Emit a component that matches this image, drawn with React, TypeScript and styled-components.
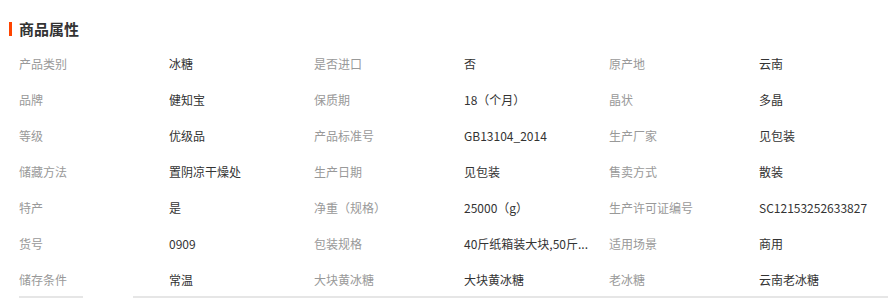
import React from 'react';
import styled, { createGlobalStyle } from 'styled-components';

const GlobalStyle = createGlobalStyle`
  body {
    margin: 0;
    background: #fff;
    font-family: "Noto Sans CJK SC", "Noto Sans", sans-serif;
  }
`;

const Panel = styled.div`
  width: 888px;
  height: 298px;
  overflow: hidden;
  display: flex;
  flex-direction: column;
`;

const Title = styled.h3`
  display: flex;
  align-items: center;
  margin: 19px 0 7px 9px;
  height: 20px;
  font-size: 15px;
  font-weight: 700;
  color: #333;
  line-height: 20px;
`;

const TitleMark = styled.span`
  width: 3px;
  height: 14px;
  margin-right: 7px;
  background: #ff4400;
`;

const Grid = styled.div`
  display: grid;
  grid-template-columns: 150px 145px 150px 145px 150px 1fr;
  grid-template-rows: repeat(6, 36px) 34px;
  padding-left: 19px;
  font-size: 12px;
  line-height: 36px;
`;

const Cell = styled.div<{ $label?: boolean }>`
  color: ${(p) => (p.$label ? '#999' : '#333')};
  white-space: nowrap;
`;

const Footer = styled.div`
  display: flex;
  gap: 50px;
  height: 2px;
  padding-left: 19px;
`;

const FooterLine = styled.div<{ $w?: number }>`
  height: 2px;
  background: #e6e6e6;
  ${(p) => (p.$w ? `width: ${p.$w}px;` : 'flex: 1;')}
`;

const rows: [string, string][][] = [
  [['产品类别', '冰糖'], ['是否进口', '否'], ['原产地', '云南']],
  [['品牌', '健知宝'], ['保质期', '18（个月）'], ['晶状', '多晶']],
  [['等级', '优级品'], ['产品标准号', 'GB13104_2014'], ['生产厂家', '见包装']],
  [['储藏方法', '置阴凉干燥处'], ['生产日期', '见包装'], ['售卖方式', '散装']],
  [['特产', '是'], ['净重（规格）', '25000（g）'], ['生产许可证编号', 'SC12153252633827']],
  [['货号', '0909'], ['包装规格', '40斤纸箱装大块,50斤...'], ['适用场景', '商用']],
  [['储存条件', '常温'], ['大块黄冰糖', '大块黄冰糖'], ['老冰糖', '云南老冰糖']],
];

const App: React.FC = () => {
  return (
    <Panel>
      <GlobalStyle />
      <Title>
        <TitleMark />
        商品属性
      </Title>
      <Grid>
        {rows.map((row) =>
          row.map(([label, value]) => (
            <React.Fragment key={label + value}>
              <Cell $label>{label}</Cell>
              <Cell>{value}</Cell>
            </React.Fragment>
          ))
        )}
      </Grid>
      <Footer>
        <FooterLine $w={64} />
        <FooterLine />
      </Footer>
    </Panel>
  );
};

export default App;
